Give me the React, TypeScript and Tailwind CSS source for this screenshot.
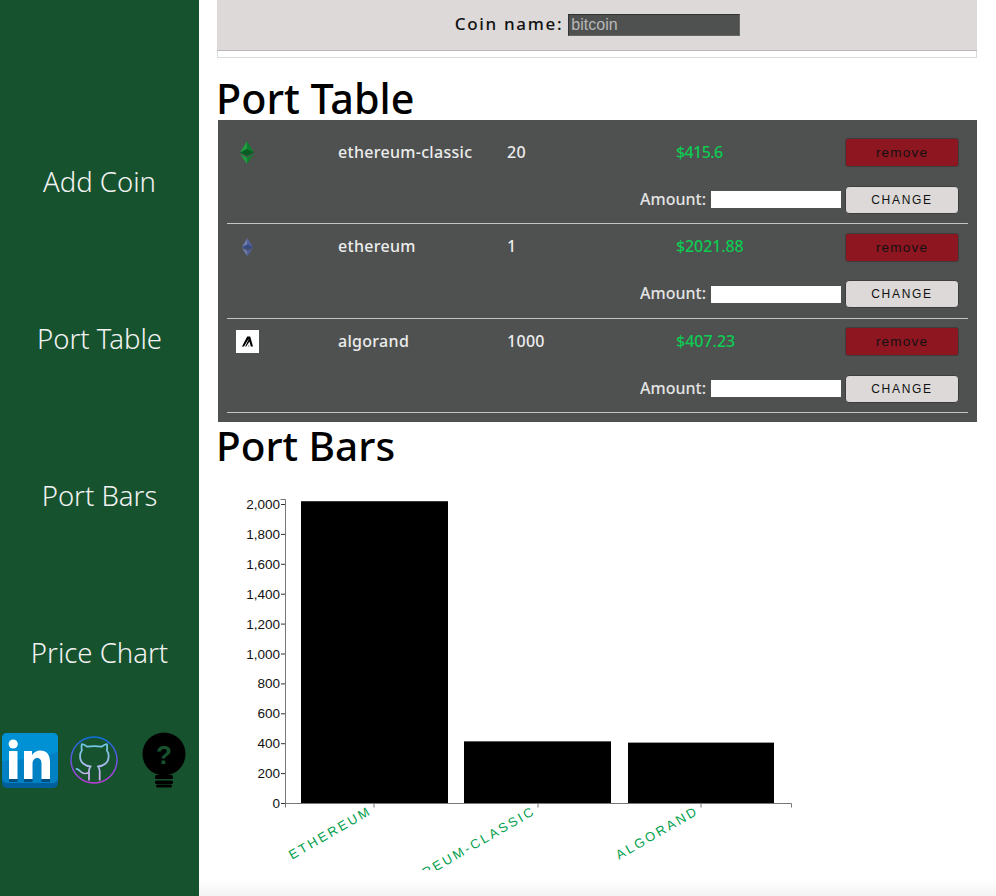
import React from "react";

function LinkedIn() {
  return (
    <svg width="58" height="55" viewBox="0 0 58 55">
      <rect x="1" y="0" width="56" height="55" rx="5" fill="#01609b" />
      <rect x="1" y="0" width="56" height="50" rx="5" fill="#0081c4" />
      <path d="M1 5a5 5 0 0 1 5-5h46a5 5 0 0 1 5 5v14C40 24 20 27 1 28z" fill="#0090d4" />
      <rect x="8" y="18" width="8.500" height="28" fill="#fff" />
      <circle cx="12.200" cy="11" r="4.600" fill="#fff" />
      <path d="M23 18h8v4c2-3 5-4.600 8-4.600 7 0 10 4.400 10 11.600v17h-8.500V31c0-3.500-1.200-6-4.300-6-3 0-4.700 2.500-4.700 6v15H23z" fill="#fff" />
      <path d="M8 46h8.500v3H8zM23 46h8.500v3H23zM40.500 46H49v3h-8.500z" fill="#01507f" />
    </svg>
  );
}

function GithubMark() {
  return (
    <svg width="50" height="50" viewBox="0 0 50 50" fill="none">
      <defs>
        <linearGradient id="ghring" x1="0" y1="0" x2="0" y2="1">
          <stop offset="0" stopColor="#0f6fe0" />
          <stop offset="1" stopColor="#c03ae0" />
        </linearGradient>
        <linearGradient id="ghcat" x1="0" y1="0" x2="0" y2="1">
          <stop offset="0" stopColor="#6cc8e4" />
          <stop offset="1" stopColor="#d2aeee" />
        </linearGradient>
      </defs>
      <circle cx="25" cy="25" r="23" stroke="url(#ghring)" strokeWidth="1.500" />
      <g transform="translate(4 5.500) scale(1.780)" stroke="url(#ghcat)" strokeWidth="1" strokeLinecap="round" strokeLinejoin="round">
        <path d="M15 22v-4a4.800 4.800 0 0 0-1-3.500c3 0 6-2 6-5.500.08-1.250-.27-2.480-1-3.500.28-1.150.28-2.350 0-3.500 0 0-1 0-3 1.500-2.640-.5-5.360-.5-8 0C6 2 5 2 5 2c-.3 1.150-.3 2.350 0 3.500A5.403 5.403 0 0 0 4 9c0 3.500 3 5.500 6 5.500-.39.49-.68 1.050-.85 1.650-.17.6-.22 1.230-.15 1.850v4" />
        <path d="M9 18c-4.510 2-5-2-7-2" />
      </g>
    </svg>
  );
}

function Bulb() {
  return (
    <svg width="44" height="56" viewBox="0 0 44 56">
      <circle cx="22" cy="22" r="21.500" fill="#000" />
      <path d="M13 38h18v3H13z" fill="#000" />
      <rect x="13" y="43" width="18" height="4" rx="1.500" fill="#000" />
      <rect x="13" y="48.500" width="18" height="3.500" rx="1.500" fill="#000" />
      <rect x="14" y="52.500" width="16" height="3" rx="1.500" fill="#000" />
      <text x="22" y="32" textAnchor="middle" fontSize="26" fontWeight="700" fill="#17522f" fontFamily="Liberation Sans, sans-serif">?</text>
    </svg>
  );
}

function Eth({ a, b, c, w, h }: { a: string; b: string; c: string; w: number; h: number }) {
  return (
    <svg width={w} height={h} viewBox="0 0 14 23">
      <polygon points="7,0 0,11.500 7,15" fill={a} />
      <polygon points="7,0 14,11.500 7,15" fill={b} />
      <polygon points="0,11.500 7,8 14,11.500 7,15" fill={c} />
      <polygon points="0,13 7,23 7,16.500" fill={a} />
      <polygon points="14,13 7,23 7,16.500" fill={b} />
    </svg>
  );
}

function Algo() {
  return (
    <svg width="23" height="23" viewBox="0 0 23 23">
      <rect width="23" height="23" fill="#fff" />
      <polygon points="6,16.500 11.200,6.500 14.200,6.500 17,16.500 14.800,16.500 13.500,11.500 10.200,16.500 12.300,16.500 13,14.800 13.200,16.500 9.200,16.500 12.500,9.800 12.500,9 8,16.500" fill="#000" />
    </svg>
  );
}

const rows = [
  { icon: <Eth w={14} h={23} a="#1f9c3f" b="#0f7f2f" c="#0b5c24" />, pad: "pl-[13px]", name: "ethereum-classic", qty: "20", price: "$415.6", ptrack: "tracking-[-0.6px]" },
  { icon: <Eth w={11} h={18} a="#7080b8" b="#4f5f9c" c="#3a4a80" />, pad: "pl-[15px]", name: "ethereum", qty: "1", price: "$2021.88", ptrack: "tracking-[-0.1px]" },
  { icon: <Algo />, pad: "pl-[9px]", name: "algorand", qty: "1000", price: "$407.23", ptrack: "tracking-[0px]" },
];

function Row({ r }: { r: (typeof rows)[number] }) {
  return (
    <div className="h-[94.500px] border-b border-[#c4c4c4] flex flex-col text-[16px] font-medium text-[#ececec]">
      <div className="grid grid-cols-[111px_169px_169px_169px_114px] items-center h-[29px] mt-[8.500px] shrink-0">
        <div className={`${r.pad} flex items-center h-[23px]`}>{r.icon}</div>
        <div className="tracking-[0.3px] pb-[2px]">{r.name}</div>
        <div className="tracking-[0.3px] pb-[2px]">{r.qty}</div>
        <div className={`text-[#0ccb52] pb-[2px] ${r.ptrack}`}>{r.price}</div>
        <button className="h-[29px] pt-[2px] rounded-[3px] bg-[#8e1620] border border-[#3d3d3d] text-[#111] text-[13.500px] font-normal tracking-[1.200px] font-['Liberation_Sans',sans-serif]">remove</button>
      </div>
      <div className="flex items-center justify-end h-[28px] mt-[18.500px] pr-[9px] shrink-0">
        <span className="mr-[5px] pb-[2px] text-[#e4e4e4]">Amount:</span>
        <input className="w-[130px] h-[17px] bg-white mr-[4px]" />
        <button className="w-[114px] h-[28px] rounded-[4px] bg-[#dcd9d8] border border-[#3d3d3d] text-[#111] text-[12px] font-normal tracking-[1.700px] font-['Liberation_Sans',sans-serif]">CHANGE</button>
      </div>
    </div>
  );
}

const ticks = [0, 200, 400, 600, 800, 1000, 1200, 1400, 1600, 1800, 2000];

function Chart() {
  const y0 = 333.5;
  const yFor = (v: number) => y0 - (v / 2000) * 299;
  const ax = 68;
  const bars = [
    { x: 84, w: 147, v: 2021.88, cx: 157, label: "ETHEREUM" },
    { x: 247, w: 147, v: 415.6, cx: 321, label: "ETHEREUM-CLASSIC" },
    { x: 411, w: 146, v: 407.23, cx: 484, label: "ALGORAND" },
  ];
  return (
    <svg width="760" height="400" viewBox="0 0 760 400" className="block">
      {bars.map((b) => (
        <rect key={b.label} x={b.x} y={yFor(b.v)} width={b.w} height={y0 - yFor(b.v)} fill="#000" />
      ))}
      <path d={`M${ax - 4.5} 29.500H${ax + 0.5}V${y0}`} fill="none" stroke="#777" />
      <path d={`M${ax - 4} ${y0}H574.500V${y0 + 4}`} fill="none" stroke="#777" />
      <path d={`M${ax + 0.5} ${y0}v4`} stroke="#777" />
      {ticks.map((t) => (
        <g key={t}>
          <line x1={ax - 4} x2={ax} y1={yFor(t)} y2={yFor(t)} stroke="#333" />
          <text x={ax - 5} y={yFor(t) + 4.5} textAnchor="end" fontSize="13.500" fill="#111" fontFamily="Liberation Sans, sans-serif">
            {t.toLocaleString("en-US")}
          </text>
        </g>
      ))}
      {bars.map((b) => (
        <g key={b.label + "t"}>
          <line x1={b.cx} x2={b.cx} y1={y0} y2={y0 + 4} stroke="#777" />
          <text
            transform={`translate(${b.cx - 6} ${y0 + 2}) rotate(-30)`}
            textAnchor="end"
            dy="0.7em"
            fontSize="13"
            letterSpacing="2.500"
            fill="#00a04c"
            fontFamily="Liberation Sans, sans-serif"
          >
            {b.label}
          </text>
        </g>
      ))}
    </svg>
  );
}

export default function App() {
  return (
    <div className="w-[996px] h-[896px] overflow-hidden flex bg-white font-['Noto_Sans',sans-serif]">
      <aside className="w-[199px] shrink-0 bg-[#17522f] flex flex-col text-[#f2f2f2] text-[27.500px] font-light">
        <nav className="pt-[103.500px] flex flex-col">
          {["Add Coin", "Port Table", "Port Bars", "Price Chart"].map((n) => (
            <div key={n} className="h-[157px] flex items-center justify-center">{n}</div>
          ))}
        </nav>
        <div className="flex items-start mt-[1px] pl-[1px]">
          <LinkedIn />
          <div className="ml-[10px] mt-[2px]"><GithubMark /></div>
          <div className="ml-[23px] mt-[-1px]"><Bulb /></div>
        </div>
      </aside>
      <div className="w-[797px] shrink-0 flex flex-col">
        <main className="h-[880px] pl-[18px] pr-[19px] flex flex-col shrink-0">
          <div className="h-[58px] border border-[#dadada] border-t-0 shrink-0">
            <div className="h-[51px] -mx-px bg-[#dcd9d8] border-b border-[#b8b8b8] flex items-center justify-center pl-[1px]">
              <span className="text-[17px] font-medium tracking-[1.700px] text-[#111] mr-[5px] pb-[2px]">Coin name:</span>
              <input
                readOnly
                value="bitcoin"
                className="w-[172px] h-[22px] mb-px bg-[#4f5150] border border-[#333] border-r-[#666] border-b-[#666] px-[2px] text-[16px] text-[#b8b8b8] font-['Liberation_Sans',sans-serif] outline-none"
              />
            </div>
          </div>
          <h2 className="h-[62px] -ml-px flex items-end text-[41.300px] leading-[44px] font-medium text-black shrink-0">Port Table</h2>
          <section className="ml-[1px] h-[302px] bg-[#4f5150] px-[9px] pt-[9.500px] shrink-0">
            {rows.map((r) => <Row key={r.name} r={r} />)}
          </section>
          <h2 className="h-[48px] -ml-px flex items-center text-[40.500px] leading-[46px] font-medium text-black shrink-0">Port Bars</h2>
          <div className="shrink-0"><Chart /></div>
        </main>
        <div className="h-[16px] shrink-0 bg-gradient-to-b from-white to-[#f3f3f3]" />
      </div>
    </div>
  );
}
